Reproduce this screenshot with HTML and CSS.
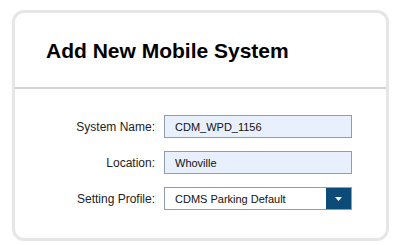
FILE: index.html
```html
<!DOCTYPE html>
<html>
<head>
<meta charset="utf-8">
<link rel="stylesheet" href="styles.css">
</head>
<body>
<div class="card">
  <div class="card-header">
    <h1 class="title">Add New Mobile System</h1>
  </div>
  <div class="card-body">
    <div class="row">
      <label class="label">System Name:</label>
      <div class="field input">CDM_WPD_1156</div>
    </div>
    <div class="row">
      <label class="label">Location:</label>
      <div class="field input">Whoville</div>
    </div>
    <div class="row">
      <label class="label">Setting Profile:</label>
      <div class="field select">
        <span class="select-text">CDMS Parking Default</span>
        <span class="select-btn"><svg width="7" height="4" viewBox="0 0 7 4"><path d="M0 0H7L3.5 4Z" fill="#fff"/></svg></span>
      </div>
    </div>
  </div>
</div>
</body>
</html>
```
FILE: styles.css
```css
html, body {
  margin: 0;
  padding: 0;
  background: #ffffff;
}
body {
  padding: 10px 0 0 12px;
  font-family: "Liberation Sans", Arial, sans-serif;
}
.card {
  width: 371px;
  height: 225px;
  border: 3px solid #e6e6e6;
  border-radius: 12px;
  background: #fff;
  display: flex;
  flex-direction: column;
}
.card-header {
  height: 74px;
  border-bottom: 2px solid #d3d3d3;
  display: flex;
  align-items: center;
  padding-left: 31px;
}
.title {
  margin: 0;
  font-size: 21px;
  font-weight: bold;
  color: #000;
  padding-top: 1px;
}
.card-body {
  padding-top: 26px;
  display: flex;
  flex-direction: column;
  gap: 13px;
}
.row {
  display: flex;
  align-items: center;
  gap: 9px;
}
.label {
  width: 140px;
  text-align: right;
  font-size: 12px;
  color: #222;
}
.field {
  box-sizing: border-box;
  width: 188px;
  height: 23px;
  border: 1px solid #8e9eae;
  font-size: 11px;
  color: #111;
  display: flex;
  align-items: center;
}
.input {
  background: #e8f0fe;
  padding-left: 10px;
}
.select {
  background: #fff;
  padding-left: 10px;
}
.select-text {
  flex: 1;
}
.select-btn {
  width: 25px;
  height: 21px;
  background: #0c4b77;
  display: flex;
  align-items: center;
  justify-content: center;
}
```
